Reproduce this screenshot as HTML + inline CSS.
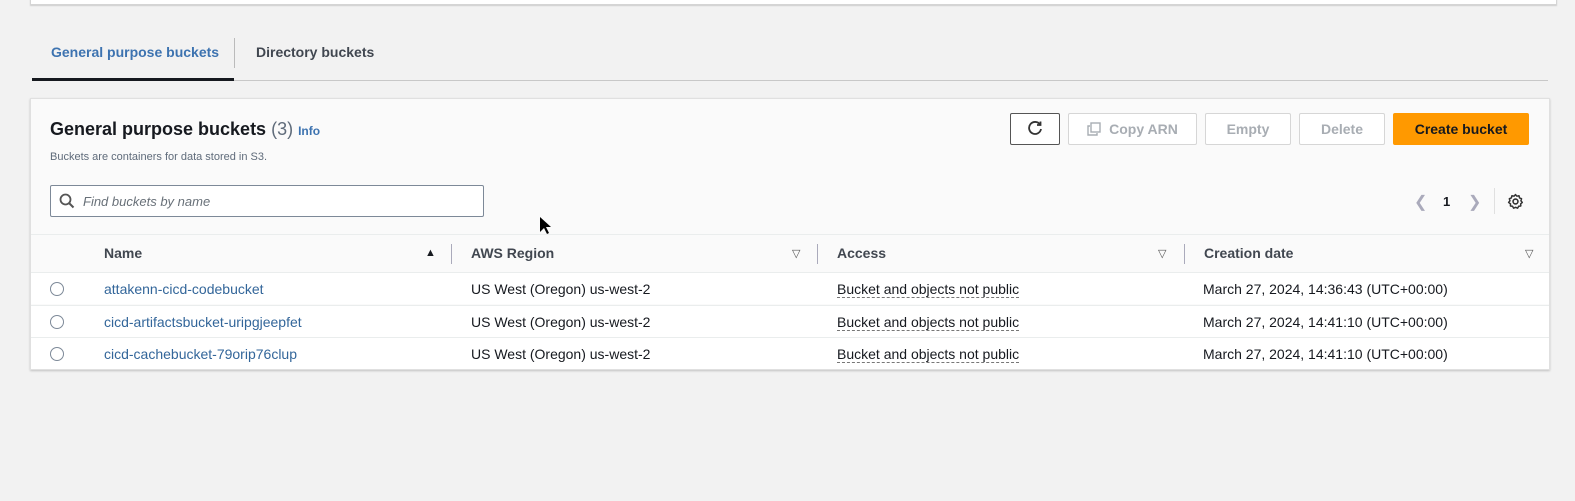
<!DOCTYPE html>
<html><head><style>
*{box-sizing:border-box;margin:0;padding:0}
body{width:1575px;height:501px;background:#f2f2f2;font-family:"Liberation Sans",sans-serif;position:relative;overflow:hidden;color:#16191f}
.abs{position:absolute}
.topcard{left:30px;top:-10px;width:1527px;height:15px;background:#fff;border:1px solid #d5d5d5;box-shadow:0 1px 1px rgba(0,0,0,.15)}
.tab{top:44px;font-size:14px;font-weight:bold;color:#414750}
.panel{left:30px;top:98px;width:1520px;height:272px;background:#fafafa;border:1px solid #e0e0e0;box-shadow:0 1px 2px rgba(0,0,0,.2)}
.btn{top:113px;height:32px;border:1px solid #d6d6d6;background:#fff;font-size:14px;font-weight:bold;color:#a8adb3;display:flex;align-items:center;justify-content:center;border-radius:2px}
.th{top:245px;font-size:14px;font-weight:bold;color:#414750}
.row{left:31px;width:1518px;height:32px;background:#fff;border-top:1px solid #eaeded}
.cell{font-size:14px;color:#16191f;position:absolute;top:8px}
.link{color:#33669a}
.acc{border-bottom:1px dashed #777;line-height:16px}
.radio{position:absolute;left:19px;top:9px;width:14px;height:14px;border:1.5px solid #7d8998;border-radius:50%}
.sep{width:1px;height:20px;background:#aab;top:244px}
</style></head><body>
<div class="abs topcard"></div>
<div class="abs tab" style="left:51px;color:#3d73b0">General purpose buckets</div>
<div class="abs" style="left:234px;top:38px;width:1px;height:30px;background:#bbb"></div>
<div class="abs tab" style="left:256px">Directory buckets</div>
<div class="abs" style="left:32px;top:80px;width:1516px;height:1px;background:#c8c8c8"></div>
<div class="abs" style="left:32px;top:78px;width:202px;height:3px;background:#16191f"></div>

<div class="abs panel"></div>
<div class="abs" style="left:50px;top:119px;font-size:18px;font-weight:bold;color:#16191f">General purpose buckets <span style="font-weight:normal;color:#5f6b7a">(3)</span> <span style="font-size:12px;color:#3d73b0;font-weight:bold">Info</span></div>
<div class="abs" style="left:50px;top:151px;font-size:11px;color:#5f6b7a">Buckets are containers for data stored in S3.</div>
<div class="abs" style="left:50px;top:185px;width:434px;height:32px;background:#fff;border:1px solid #7d8998;border-radius:2px"></div>
<svg class="abs" style="left:59px;top:193px" width="16" height="16" viewBox="0 0 16 16"><circle cx="6.5" cy="6.5" r="5" fill="none" stroke="#555" stroke-width="1.8"/><path d="M10 10l4.5 4.5" stroke="#555" stroke-width="2"/></svg>
<div class="abs" style="left:83px;top:194px;font-size:13px;font-style:italic;color:#687078">Find buckets by name</div>

<div class="abs btn" style="left:1010px;width:50px;border-color:#555;color:#333"><svg width="18" height="18" viewBox="0 0 18 18"><path d="M14 4.5A6 6 0 1 0 15 9" fill="none" stroke="#333" stroke-width="1.8"/><path d="M14.5 1.5v3.5h-3.5" fill="none" stroke="#333" stroke-width="1.8"/></svg></div>
<div class="abs btn" style="left:1068px;width:129px"><svg width="14" height="14" viewBox="0 0 14 14" style="margin-right:8px"><rect x="4" y="1" width="9" height="9" fill="none" stroke="#a8adb3" stroke-width="1.4"/><path d="M3 4H1v9h9v-2" fill="none" stroke="#a8adb3" stroke-width="1.4"/></svg>Copy ARN</div>
<div class="abs btn" style="left:1205px;width:86px">Empty</div>
<div class="abs btn" style="left:1299px;width:86px">Delete</div>
<div class="abs btn" style="left:1393px;width:136px;background:#ff9900;border-color:#ff9900;color:#16191f">Create bucket</div>

<div class="abs" style="left:1414px;top:192px;font-size:16px;color:#aab">&#10094;</div>
<div class="abs" style="left:1443px;top:194px;font-size:13px;font-weight:bold;color:#16191f">1</div>
<div class="abs" style="left:1468px;top:192px;font-size:16px;color:#aab">&#10095;</div>
<div class="abs" style="left:1494px;top:188px;width:1px;height:26px;background:#e0e0e0"></div>
<svg class="abs" style="left:1507px;top:193px" width="17" height="17" viewBox="0 0 16 16"><circle cx="8" cy="8" r="2.3" fill="none" stroke="#333" stroke-width="1.5"/><path d="M8 1.5l1.3 1.5 2-.4.5 2 1.9.8-.6 1.9 1.3 1.6-1.5 1.3.1 2-2 .3-1 1.8-1.9-.8-1.9.8-1-1.8-2-.3.1-2L1.5 8.9 2.8 7.3 2.2 5.4l1.9-.8.5-2 2 .4z" fill="none" stroke="#333" stroke-width="1.4" stroke-linejoin="round"/></svg>

<div class="abs" style="left:31px;top:234px;width:1518px;height:1px;background:#eaeded"></div>
<div class="abs th" style="left:104px">Name</div>
<div class="abs" style="left:425px;top:247px;font-size:11px">&#9650;</div>
<div class="abs sep" style="left:451px"></div>
<div class="abs th" style="left:471px">AWS Region</div>
<div class="abs" style="left:792px;top:247px;font-size:11px;color:#555">&#9661;</div>
<div class="abs sep" style="left:817px"></div>
<div class="abs th" style="left:837px">Access</div>
<div class="abs" style="left:1158px;top:247px;font-size:11px;color:#555">&#9661;</div>
<div class="abs sep" style="left:1184px"></div>
<div class="abs th" style="left:1204px">Creation date</div>
<div class="abs" style="left:1525px;top:247px;font-size:11px;color:#555">&#9661;</div>

<div class="abs row" style="top:272px"><div class="radio"></div><span class="cell link" style="left:73px">attakenn-cicd-codebucket</span><span class="cell" style="left:440px">US West (Oregon) us-west-2</span><span class="cell acc" style="left:806px">Bucket and objects not public</span><span class="cell" style="left:1172px">March 27, 2024, 14:36:43 (UTC+00:00)</span></div>
<div class="abs row" style="top:305px"><div class="radio"></div><span class="cell link" style="left:73px">cicd-artifactsbucket-uripgjeepfet</span><span class="cell" style="left:440px">US West (Oregon) us-west-2</span><span class="cell acc" style="left:806px">Bucket and objects not public</span><span class="cell" style="left:1172px">March 27, 2024, 14:41:10 (UTC+00:00)</span></div>
<div class="abs row" style="top:337px"><div class="radio"></div><span class="cell link" style="left:73px">cicd-cachebucket-79orip76clup</span><span class="cell" style="left:440px">US West (Oregon) us-west-2</span><span class="cell acc" style="left:806px">Bucket and objects not public</span><span class="cell" style="left:1172px">March 27, 2024, 14:41:10 (UTC+00:00)</span></div>

<svg class="abs" style="left:539px;top:216px" width="12" height="20" viewBox="0 0 12 20"><path d="M1 1v15l4-4 3 6 2-1-3-6h5z" fill="#000"/></svg>
</body></html>
